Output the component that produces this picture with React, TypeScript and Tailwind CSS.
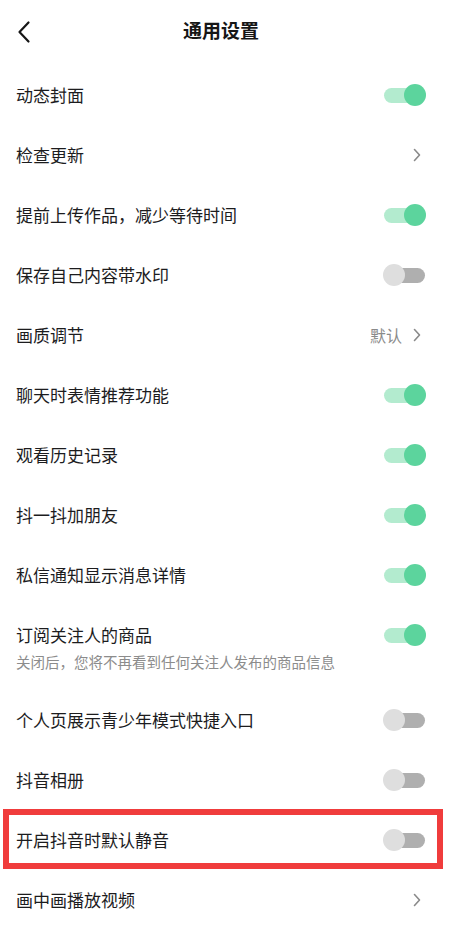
import React from "react";

type Item = {
  label: string;
  kind: "toggle" | "link";
  on?: boolean;
  value?: string;
  note?: string;
  marked?: boolean;
};

const items: Item[] = [
  { label: "动态封面", kind: "toggle", on: true },
  { label: "检查更新", kind: "link" },
  { label: "提前上传作品，减少等待时间", kind: "toggle", on: true },
  { label: "保存自己内容带水印", kind: "toggle", on: false },
  { label: "画质调节", kind: "link", value: "默认" },
  { label: "聊天时表情推荐功能", kind: "toggle", on: true },
  { label: "观看历史记录", kind: "toggle", on: true },
  { label: "抖一抖加朋友", kind: "toggle", on: true },
  { label: "私信通知显示消息详情", kind: "toggle", on: true },
  {
    label: "订阅关注人的商品",
    kind: "toggle",
    on: true,
    note: "关闭后，您将不再看到任何关注人发布的商品信息",
  },
  { label: "个人页展示青少年模式快捷入口", kind: "toggle", on: false },
  { label: "抖音相册", kind: "toggle", on: false },
  { label: "开启抖音时默认静音", kind: "toggle", on: false, marked: true },
  { label: "画中画播放视频", kind: "link" },
];

function Toggle({ on }: { on?: boolean }) {
  return (
    <div className="relative flex h-[24px] w-[43px] shrink-0 items-center">
      <div
        className={
          on
            ? "h-[15px] w-[41px] ml-[1px] rounded-full bg-[#b3ebcf]"
            : "h-[15px] w-[41px] ml-[1px] rounded-full bg-[#afafaf]"
        }
      />
      <div
        className={
          on
            ? "absolute right-0 top-[1px] h-[22px] w-[22px] rounded-full bg-[#5cd49d]"
            : "absolute left-0 top-[1px] h-[22px] w-[22px] rounded-full bg-[#dedede]"
        }
      />
    </div>
  );
}

function Chevron() {
  return (
    <svg width="10" height="16" viewBox="0 0 10 16" fill="none">
      <path d="M2.5 2.5 L7.5 8 L2.5 13.5" stroke="#8a8a8a" strokeWidth="1.6" strokeLinecap="round" strokeLinejoin="round" />
    </svg>
  );
}

function Row({ item }: { item: Item }) {
  if (item.note) {
    return (
      <div className="flex justify-between pl-[16px] pr-[24px] pt-[18px] pb-[18px]">
        <div className="flex flex-col">
          <span className="text-[17px] leading-[24px] text-[#1c1c1e]">{item.label}</span>
          <span className="mt-[5px] text-[14.5px] leading-[20px] text-[#8c8c8c]">{item.note}</span>
        </div>
        <Toggle on={item.on} />
      </div>
    );
  }
  return (
    <div className="relative flex h-[60px] items-center justify-between pl-[16px] pr-[24px]">
      <span className="text-[17px] leading-[24px] text-[#1c1c1e]">{item.label}</span>
      {item.kind === "toggle" ? (
        <Toggle on={item.on} />
      ) : (
        <div className="flex items-center gap-[10px] pr-[4px]">
          {item.value && <span className="text-[16px] text-[#8a8a8a]">{item.value}</span>}
          <Chevron />
        </div>
      )}
      {item.marked && (
        <div className="pointer-events-none absolute left-[3px] right-[7px] top-[-1px] bottom-[1px] border-[6px] border-[#f03c3c]" />
      )}
    </div>
  );
}

export default function App() {
  return (
    <div
      className="min-h-screen w-[450px] bg-white"
      style={{ fontFamily: '"Noto Sans CJK SC", "Noto Sans", sans-serif' }}
    >
      <header className="relative flex h-[65px] items-center justify-center">
        <div className="absolute left-[16px] top-[20px]">
          <svg width="16" height="24" viewBox="0 0 16 24" fill="none">
            <path d="M12.5 2.5 L3.5 12 L12.5 21.5" stroke="#161616" strokeWidth="2.2" strokeLinecap="round" strokeLinejoin="round" />
          </svg>
        </div>
        <h1 className="-mt-[4px] mr-[8px] text-[19px] font-semibold text-[#161616]">通用设置</h1>
      </header>
      <main className="flex flex-col">
        {items.map((it) => (
          <Row key={it.label} item={it} />
        ))}
      </main>
    </div>
  );
}
